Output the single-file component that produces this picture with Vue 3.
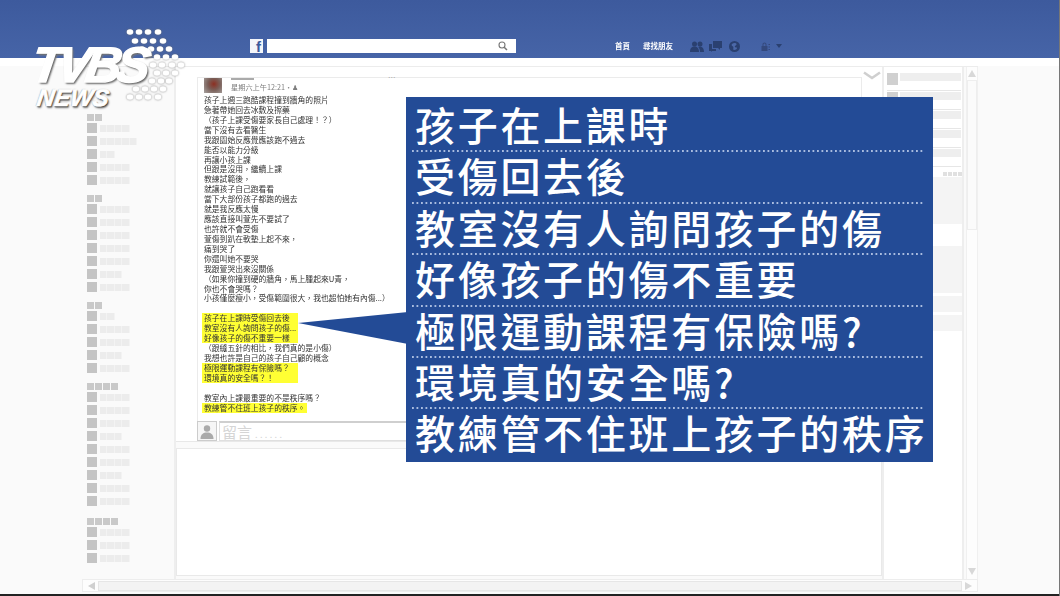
<script setup>
const navText = ['首頁', '尋找朋友']

const sidebar = [
  { head: 2, gap: 10, items: [30, 37, 15, 30, 30] },
  { head: 2, gap: 10, items: [30, 30, 30, 30, 30, 22, 30] },
  { head: 2, gap: 10, items: [15, 30, 30, 22, 30] },
  { head: 4, gap: 12, items: [30, 30, 30, 22, 30, 30, 22, 30, 30] },
  { head: 4, gap: 0, items: [30, 30, 30] }
]

const postBlocks = [
  { lines: ['孩子上週三跑酷課程撞到牆角的照片', '急著帶她回去冰敷及擦藥', '（孩子上課受傷要家長自己處理！？）', '當下沒有去看醫生', '我跟園始反應覺應該跑不過去', '能否以能力分級', '再讓小孩上課', '但跟是沒用，繼續上課', '教練試範後，', '就讓孩子自己跑看看', '當下大部份孩子都跑的過去', '就是我反應太慢', '應該直接叫萱先不要試了', '也許就不會受傷', '萱傷到趴在軟墊上起不來，', '痛到哭了', '你還叫她不要哭', '我跟萱哭出來沒關係', '（如果你撞到硬的牆角，馬上腫起來U青，', '你也不會哭嗎？', '小孩僅麼瘦小，受傷範圍很大，我也超怕她有內傷...）', '\u00a0'] },
  { hl: 96, lines: ['孩子在上課時受傷回去後', '教室沒有人詢問孩子的傷...', '好像孩子的傷不重要一樣'] },
  { lines: ['（跟縫五針的相比，我們真的是小傷）', '我想也許是自己的孩子自己顧的概念'] },
  { hl: 96, lines: ['極限運動課程有保險嗎？', '環境真的安全嗎？！'] },
  { lines: ['\u00a0', '教室內上課最重要的不是秩序嗎？'] },
  { hl: 105, lines: ['教練管不住班上孩子的秩序。'] }
]

const panelRows = ['孩子在上課時', '受傷回去後', '教室沒有人詢問孩子的傷', '好像孩子的傷不重要', '極限運動課程有保險嗎?', '環境真的安全嗎?', '教練管不住班上孩子的秩序']

const dots = [
  [32, [130, 139, 148, 158]],
  [41, [135, 144, 153, 163]],
  [49, [142, 151, 160, 169]],
  [57, [157, 166, 175]],
  [65, [153, 162, 172, 181]],
  [73, [157, 166, 175]],
  [81, [152, 161, 169]],
  [89, [136, 145, 154, 163]],
  [97, [130, 139, 148, 158]]
].flatMap(([y, xs]) => xs.map(x => ({ x, y })))
</script>

<template>
  <div class="screen">
    <header class="topbar">
      <span class="fb">f</span>
      <div class="search">
        <svg width="10" height="10" viewBox="0 0 10 10"><circle cx="4" cy="4" r="3" fill="none" stroke="#777" stroke-width="1.1"/><path d="M6.2 6.2 9 9" stroke="#777" stroke-width="1.5"/></svg>
      </div>
      <nav class="nav">
        <span v-for="t in navText" :key="t" class="nav-link">{{ t }}</span>
        <svg class="ic-friends" width="14" height="11" viewBox="0 0 14 11"><circle cx="4.5" cy="3" r="2.5"/><circle cx="10" cy="3" r="2.5"/><path d="M0 11c0-4 2-5.500 4.500-5.500S9 7 9 11zM9.500 5.500c2.500 0 4.500 1.500 4.500 5.500h-4c0-2-.5-4-1.800-5z"/></svg>
        <svg class="ic-msg" width="13" height="11" viewBox="0 0 13 11"><path d="M4 0h9v7h-2v2L9 7H4zM0 3h3v5h4v2H3l-1 1v-1H0z"/></svg>
        <svg class="ic-globe" width="11" height="11" viewBox="0 0 11 11"><circle cx="5.500" cy="5.500" r="5.500"/><path d="M3 3c2-1.500 4-1 4.500 0S5 5 6 6s2 0 2 1-1.500 2-3 2 0-3-1-3.500S2 4 3 3z" fill="#4b68a8"/></svg>
        <svg class="ic-lock" width="9" height="9" viewBox="0 0 9 9"><path d="M1.500 4V2.500a2 2 0 0 1 4 0V4H6.500v5H.5V4zM2.500 4h2V2.500a1 1 0 0 0-2 0z" fill-rule="evenodd"/><path d="M7.500 2h1.500v1H7.500zM7.500 4.500h1.500v1H7.500zM7.500 7h1.500v1H7.500z"/></svg>
        <svg class="ic-caret" width="6" height="4" viewBox="0 0 6 4"><path d="M0 0h6L3 4z"/></svg>
      </nav>
    </header>

    <main class="desk">
      <div class="window">
        <div class="panes">
          <aside class="sidebar">
            <section v-for="(g, i) in sidebar" :key="i" class="side-group" :style="{ marginBottom: g.gap + 'px' }">
              <div class="side-head"><i v-for="n in g.head" :key="n"></i></div>
              <div v-for="(w, j) in g.items" :key="j" class="side-item">
                <b></b><span :style="{ width: w + 'px' }"></span>
              </div>
            </section>
          </aside>

          <div class="feed">
            <div class="post-wrap">
              <article class="post">
                <div class="post-head">
                  <div class="post-avatar"></div>
                  <div class="post-meta">
                    <div class="post-name"></div>
                    <div class="post-time">星期六上午12:21・<span class="people">♟</span></div>
                  </div>
                  <div class="post-more">...</div>
                </div>
                <div class="post-text">
                  <div v-for="(b, i) in postBlocks" :key="i" :class="{ hl: b.hl }" :style="b.hl ? { width: b.hl + 'px' } : null">
                    <p v-for="(l, j) in b.lines" :key="j">{{ l }}</p>
                  </div>
                </div>
                <div class="comment">
                  <div class="comment-avatar">
                    <svg width="18" height="18" viewBox="0 0 18 18"><circle cx="9" cy="5.500" r="3.200" fill="#aaa"/><path d="M2.500 16c0-5 3-6.500 6.500-6.500s6.500 1.500 6.500 6.500z" fill="#aaa"/></svg>
                  </div>
                  <div class="comment-input">留言<em>......</em></div>
                </div>
              </article>
              <svg class="chevron" width="18" height="9" viewBox="0 0 18 9"><path d="M1 1.500 9 7l8-5.500" fill="none" stroke="#cfcfcf" stroke-width="2.500"/></svg>
            </div>
            <div class="card-second"></div>
          </div>

          <aside class="rightcol">
            <div v-for="n in 5" :key="n" class="right-row"><b></b><span></span></div>
            <div class="right-label"><i v-for="n in 4" :key="n"></i></div>
            <div class="right-block tall"></div>
            <div class="right-block tall second"></div>
            <div class="right-block short"></div>
            <div class="right-block short"></div>
          </aside>

          <div class="vscroll">
            <svg width="8" height="7" viewBox="0 0 8 7"><path d="M0 7 4 0l4 7z" fill="#d8d8d8"/></svg>
            <div class="vthumb"></div>
            <svg class="down" width="8" height="7" viewBox="0 0 8 7"><path d="M0 0h8L4 7z" fill="#d8d8d8"/></svg>
          </div>
        </div>

        <div class="hscroll">
          <svg width="7" height="8" viewBox="0 0 7 8"><path d="M7 0v8L0 4z" fill="#d0d0d0"/></svg>
          <div class="hthumb"></div>
          <svg width="7" height="8" viewBox="0 0 7 8"><path d="M0 0v8l7-4z" fill="#d8d8d8"/></svg>
        </div>
      </div>
    </main>
    <div class="edge"></div>

    <svg class="tail" width="112" height="34" viewBox="0 0 112 34"><path d="M0 11 110 0v32z" fill="#234b96"/></svg>

    <section class="panel">
      <div v-for="(r, i) in panelRows" :key="i" class="panel-row" :class="{ last: i === panelRows.length - 1 }">{{ r }}</div>
    </section>

    <div class="logo">
      <svg class="logo-dots" width="60" height="80" viewBox="125 27 60 80">
        <ellipse v-for="(d, i) in dots" :key="i" :cx="d.x" :cy="d.y" rx="3.300" ry="2.700" />
      </svg>
      <div class="logo-tvbs">TVBS</div>
      <div class="logo-news">NEWS</div>
    </div>
  </div>
</template>

<style>
html, body { margin: 0; padding: 0; background: #fff; }
</style>

<style scoped>
.screen {
  position: relative;
  width: 1060px;
  height: 596px;
  overflow: hidden;
  display: flex;
  flex-direction: column;
  background: #fcfcfc;
  border-right: 1px solid #777;
  box-sizing: border-box;
  font-family: "Noto Sans CJK TC", "Liberation Sans", sans-serif;
}

.topbar {
  flex: 0 0 58px;
  box-sizing: border-box;
  display: flex;
  align-items: flex-start;
  padding: 39px 0 0 250px;
  background: linear-gradient(180deg, #3d5a9d 0%, #4664a7 100%);
}
.fb {
  width: 13px;
  height: 14px;
  margin-right: 4px;
  background: #f4f6fa;
  color: #3c5a9c;
  font: bold 15px/16px "Liberation Sans", sans-serif;
  text-align: right;
  padding-right: 2px;
  box-sizing: border-box;
}
.search {
  width: 249px;
  height: 14px;
  display: flex;
  align-items: center;
  justify-content: flex-end;
  padding-right: 8px;
  box-sizing: border-box;
  background: #fff;
}
.nav {
  display: flex;
  align-items: center;
  height: 14px;
  margin-left: 99px;
}
.nav svg { fill: #2a4070; flex: none; }
.nav-link {
  color: #fff;
  font-size: 7.500px;
  font-weight: 700;
  line-height: 14px;
  margin-right: 13px;
  filter: blur(0.4px);
}
.ic-friends { margin-left: 4px; }
.ic-msg { margin-left: 5px; }
.ic-globe { margin-left: 7px; }
.ic-lock { margin-left: 21px; fill: #34497d !important; }
.ic-caret { margin-left: 6px; }

.desk {
  flex: 0 0 536px;
  box-sizing: border-box;
  padding: 8px 0 2px 82px;
  background: linear-gradient(180deg, #fff 0, #fff 8px, #fafafa 8px);
}
.window {
  width: 896px;
  height: 526px;
  display: flex;
  flex-direction: column;
  border-top: 1px solid #ececec;
  box-sizing: border-box;
}
.panes {
  flex: 1;
  display: flex;
  min-height: 0;
}

.sidebar {
  flex: 0 0 92px;
  box-sizing: border-box;
  padding: 47px 0 0 5px;
}
.side-head {
  display: flex;
  gap: 1px;
  margin-bottom: 2px;
}
.side-head i {
  width: 7px;
  height: 7px;
  background: #c9c9c9;
}
.side-item {
  display: flex;
  align-items: center;
  height: 10px;
  margin-bottom: 3px;
}
.side-item b {
  width: 10px;
  height: 10px;
  background: #c4c4c4;
  margin-right: 3px;
}
.side-item span {
  height: 7px;
  background: repeating-linear-gradient(90deg, #ececec 0, #ececec 6.500px, #f3f3f3 6.500px, #f3f3f3 7.500px);
}

.feed {
  flex: 0 0 710px;
  box-sizing: border-box;
  display: flex;
  flex-direction: column;
  border-left: 2px solid #eee;
  border-right: 2px solid #eee;
  padding-bottom: 3px;
}
.post-wrap {
  flex: 0 0 374px;
  display: flex;
  align-items: flex-start;
  box-sizing: border-box;
  padding: 10px 0 0 21px;
  background: #fff;
  border-bottom: 1px solid #e8e8e8;
}
.post {
  width: 665px;
  height: 364px;
  box-sizing: border-box;
  border: 1px solid #ebebeb;
  border-width: 1px 1px 0 1px;
  display: flex;
  flex-direction: column;
}
.post-head {
  position: relative;
  height: 17px;
  display: flex;
  padding-left: 6px;
}
.post-avatar {
  width: 18px;
  height: 15px;
  background: radial-gradient(circle at 55% 40%, #8c2f22 0, #7a5f58 45%, #a9a5a3 100%);
  filter: blur(0.7px);
}
.post-meta {
  margin-left: 9px;
}
.post-name {
  width: 23px;
  height: 2px;
  background: #aaa;
  filter: blur(0.5px);
}
.post-time {
  margin-top: 2px;
  font-size: 7.200px;
  line-height: 10px;
  color: #7f7f7f;
  white-space: nowrap;
  filter: blur(0.4px);
}
.people { font-size: 7px; }
.post-more {
  position: absolute;
  left: 190px;
  top: -8px;
  color: #aaa;
  font: 9px/10px "Liberation Sans", sans-serif;
}
.post-text {
  flex: 0 0 326px;
  padding-left: 4px;
  font-size: 7.800px;
  color: #333;
  filter: blur(0.4px);
}
.post-text > div { padding-left: 2px; }
.post-text p {
  margin: 0;
  height: 9.930px;
  line-height: 9.930px;
  white-space: nowrap;
}
.hl {
  background: #ffff33;
  box-sizing: border-box;
}
.comment {
  display: flex;
  gap: 2px;
  height: 20px;
  margin-left: -1px;
}
.comment-avatar {
  width: 20px;
  height: 20px;
  box-sizing: border-box;
  border: 1px solid #ccc;
  background: #f6f6f6;
  overflow: hidden;
}
.comment-input {
  flex: 1;
  box-sizing: border-box;
  border: 1px solid #dfdfdf;
  border-top: 2px solid #cfcfcf;
  padding-left: 2px;
  color: #d5d5d5;
  font-size: 15px;
  line-height: 17px;
  white-space: nowrap;
}
.comment-input em {
  font-style: normal;
  font-size: 9px;
  letter-spacing: 2.400px;
  margin-left: 3px;
}
.chevron {
  margin: -6px 0 0 1px;
}
.card-second {
  flex: 1;
  margin-top: 6px;
  background: #fff;
  border: 1px solid #e9e9e9;
}

.rightcol {
  flex: 0 0 80px;
  box-sizing: border-box;
  display: flex;
  flex-direction: column;
  padding: 5px 0 0 3px;
  background: #fff;
  border-right: 2px solid #eee;
}
.right-row {
  flex: 0 0 19px;
  box-sizing: border-box;
  width: 74px;
  display: flex;
  gap: 2px;
  border-bottom: 1px solid #e6e6e6;
  padding-top: 1px;
}
.right-row b {
  width: 11px;
  height: 12px;
  background: #d0d0d0;
}
.right-row span {
  width: 61px;
  height: 8px;
  background: #eee;
}
.right-label {
  display: flex;
  justify-content: flex-end;
  gap: 1px;
  width: 75px;
  margin-top: 5px;
}
.right-label i {
  width: 4px;
  height: 4px;
  background: #e0e0e0;
}
.right-block {
  width: 75px;
  background: #f4f4f4;
}
.right-block.tall { height: 47px; margin-top: 1px; }
.right-block.second { margin-top: 22px; }
.right-block.short { height: 16px; margin-top: 3px; }

.vscroll {
  flex: 0 0 12px;
  margin-left: 2px;
  box-sizing: border-box;
  display: flex;
  flex-direction: column;
  align-items: center;
  padding-top: 3px;
  border: 1px solid #f0f0f0;
  border-width: 0 1px;
  background: #fdfdfd;
}
.vthumb {
  width: 10px;
  height: 150px;
  margin-top: 3px;
  box-sizing: border-box;
  border: 1px solid #eeeeee;
  background: #fbfbfb;
}
.vscroll .down {
  margin-top: auto;
  margin-bottom: 4px;
}

.hscroll {
  flex: 0 0 13px;
  display: flex;
  align-items: center;
  gap: 3px;
  padding: 0 5px;
  box-sizing: border-box;
  border: 1px solid #ededed;
  background: #fdfdfd;
}
.hthumb {
  flex: 1;
  height: 10px;
  background: #f3f3f3;
  border: 1px solid #e6e6e6;
  box-sizing: border-box;
}

.edge {
  flex: 0 0 2px;
  background: #222;
}

.tail {
  position: absolute;
  left: 298px;
  top: 312px;
}

.panel {
  position: absolute;
  left: 406px;
  top: 97px;
  width: 527px;
  height: 365px;
  box-sizing: border-box;
  padding: 4px 0 0 6px;
  background: #234b96;
  color: #fff;
  font-size: 40px;
  font-weight: 500;
  letter-spacing: 2.700px;
}
.panel-row {
  width: 512px;
  height: 51.400px;
  box-sizing: border-box;
  padding-left: 3px;
  line-height: 47px;
  white-space: nowrap;
  background: radial-gradient(circle at 1px 1px, #a9bcdf 0.9px, transparent 1.100px) 0 100% / 4.500px 2px repeat-x;
}
.panel-row.last { background: none; }

.logo {
  position: absolute;
  left: 35px;
  top: 27px;
  width: 150px;
  height: 82px;
  color: #fff;
  font-family: "Liberation Sans", sans-serif;
  font-style: italic;
  font-weight: 700;
}
.logo-dots {
  position: absolute;
  left: 90px;
  top: 0;
  width: 60px;
  height: 80px;
  fill: #fff;
  filter: drop-shadow(0.5px 0.5px 0.8px rgba(110, 110, 110, 0.8));
}
.logo-tvbs {
  position: absolute;
  left: -3px;
  top: 13px;
  font-size: 50px;
  line-height: 50px;
  letter-spacing: -5px;
  -webkit-text-stroke: 1.400px #fff;
  text-shadow: 1px 1px 2px #555, 2px 2px 2px #888;
  transform: skewX(-8deg);
}
.logo-news {
  position: absolute;
  left: 2px;
  top: 59px;
  font-size: 24px;
  line-height: 24px;
  -webkit-text-stroke: 0.7px #fff;
  text-shadow: 1px 1px 1px #444, 1.500px 1.500px 2px #777, -0.500px -0.500px 1px #999;
  transform: skewX(-8deg);
}
</style>
